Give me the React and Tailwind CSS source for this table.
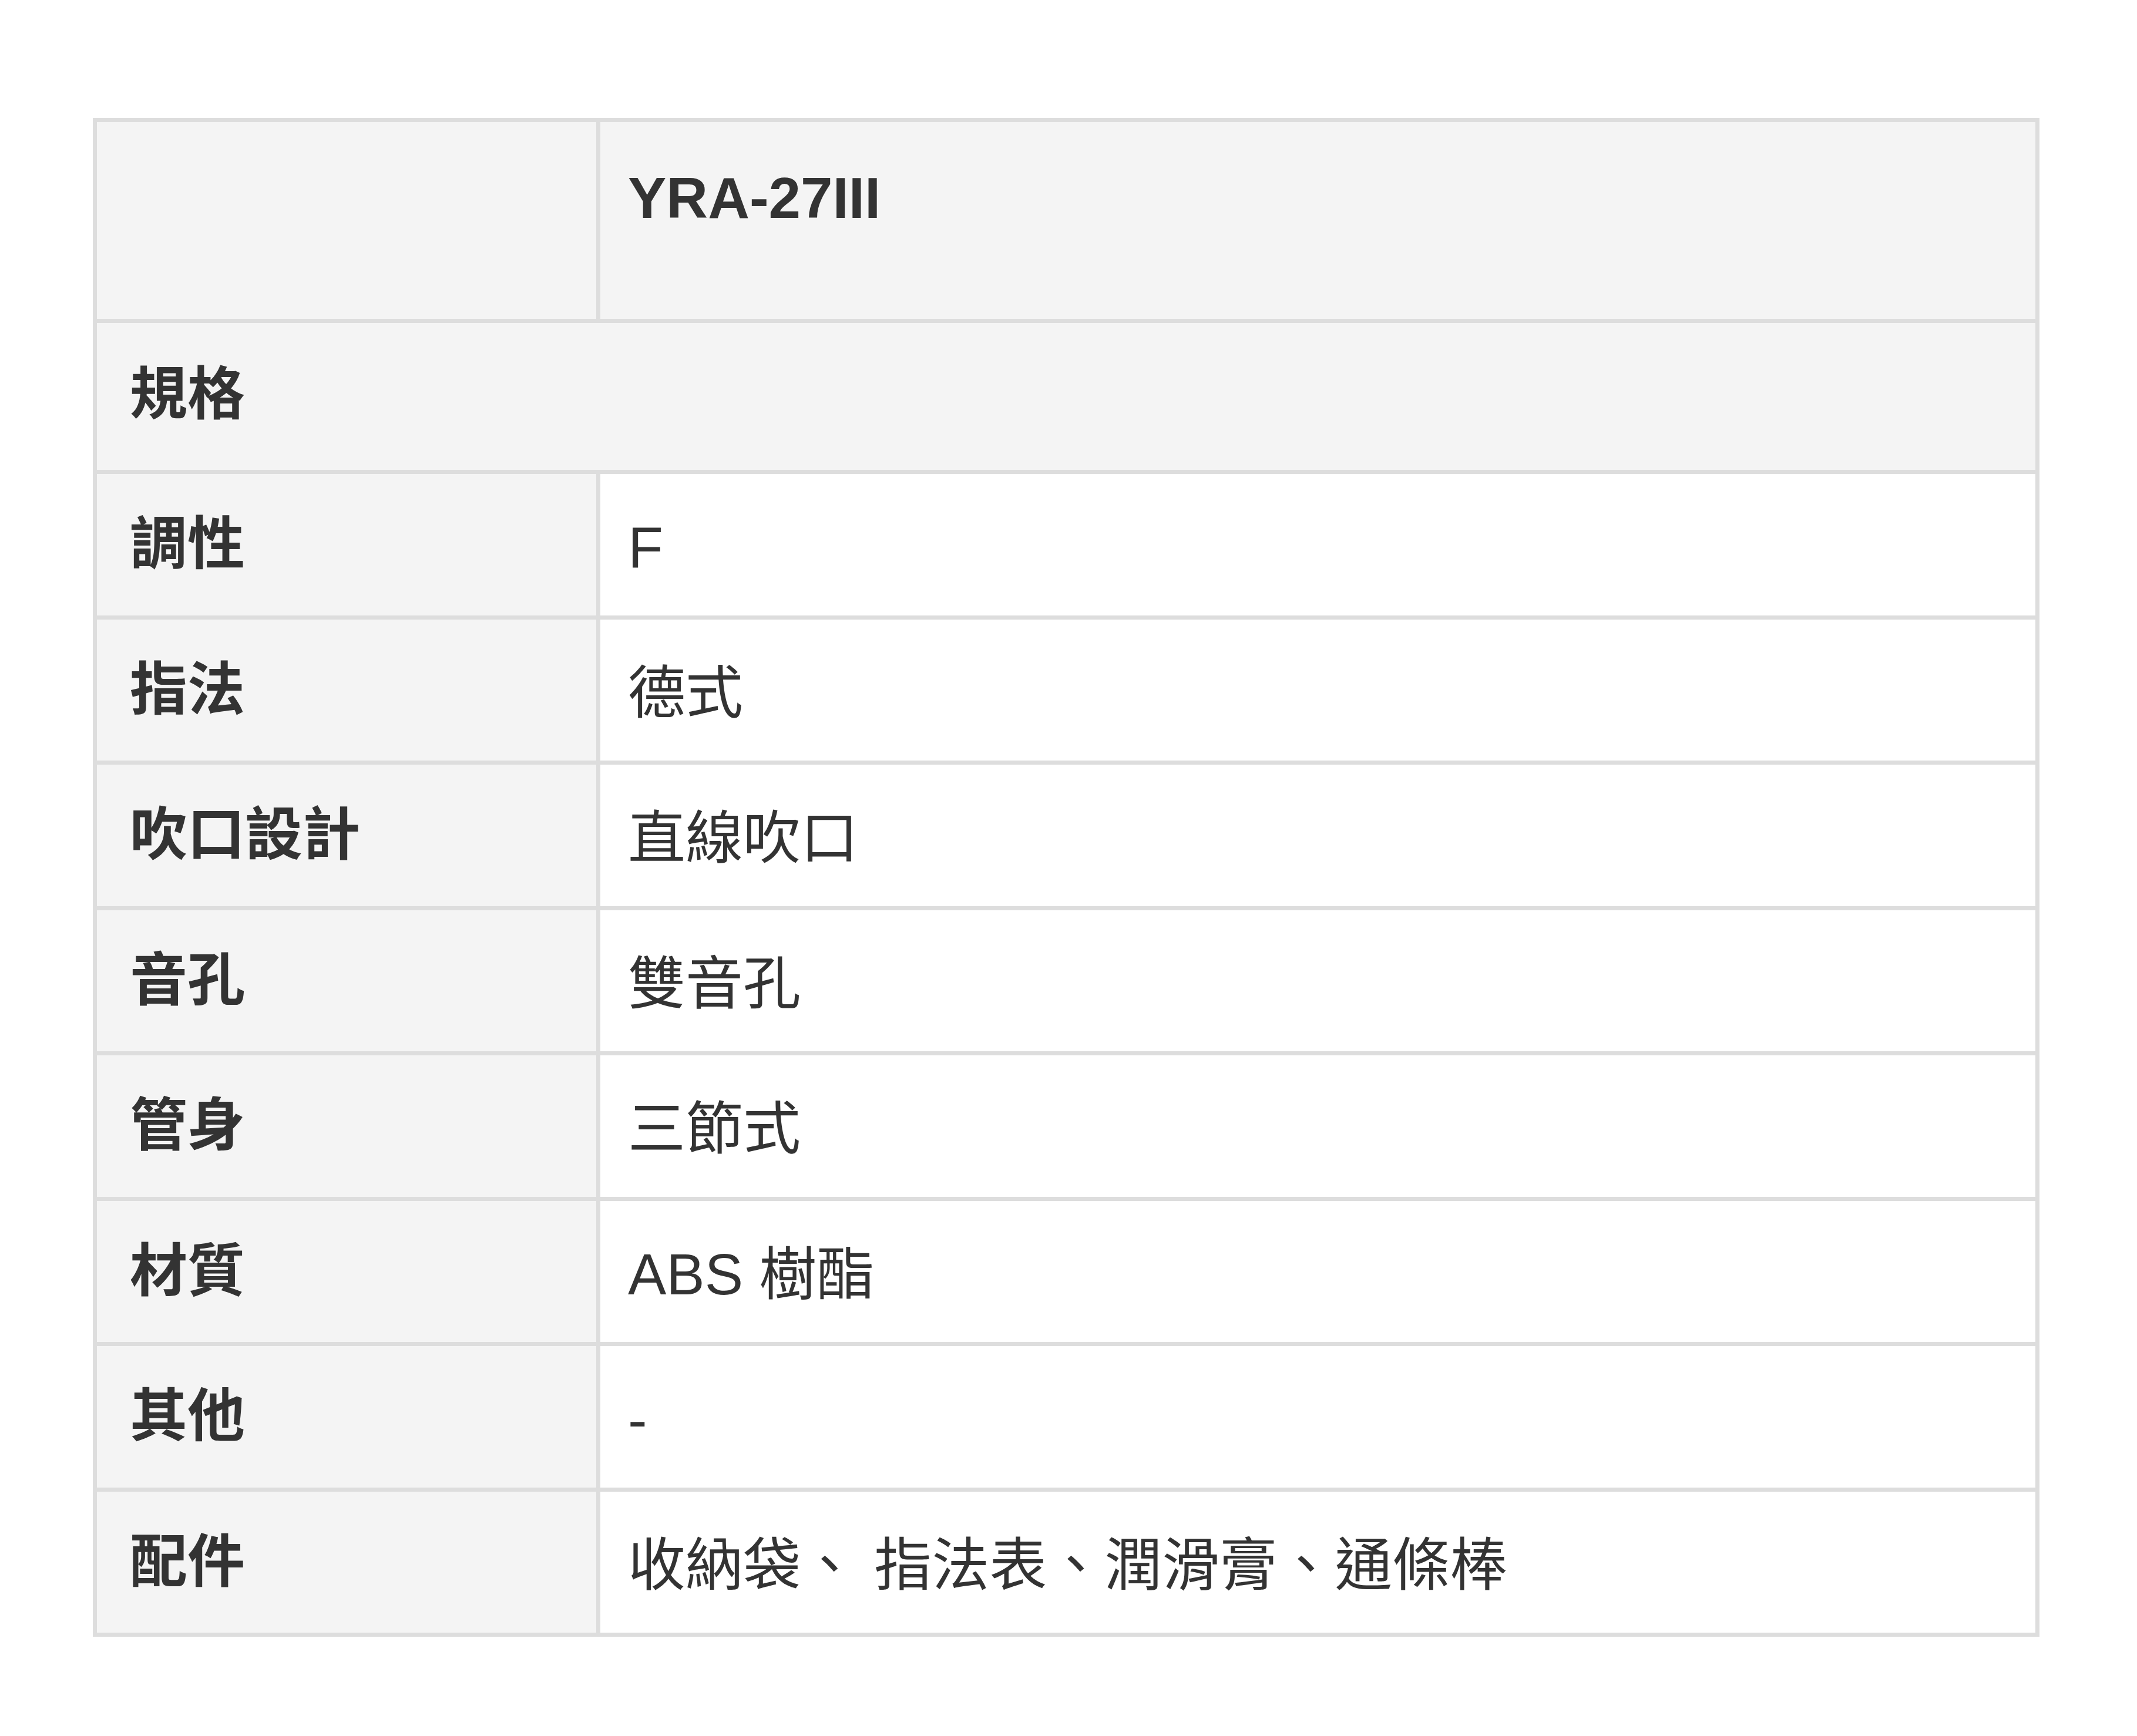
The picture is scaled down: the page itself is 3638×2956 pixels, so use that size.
import React from 'react';

const specs = [
    { label: '調性', value: 'F' },
    { label: '指法', value: '德式' },
    { label: '吹口設計', value: '直線吹口' },
    { label: '音孔', value: '雙音孔' },
    { label: '管身', value: '三節式' },
    { label: '材質', value: 'ABS 樹酯' },
    { label: '其他', value: '-' },
    { label: '配件', value: '收納袋、 指法表、潤滑膏、通條棒' },
];

export default function App() {
    return (
        <div className="min-h-screen bg-white pl-[158px] pt-[201px] text-[#333333] font-[family-name:'Liberation_Sans','Noto_Sans_CJK_TC',sans-serif] text-[98px] leading-[147px]">
            <div className="w-[3314px] border-[7px] border-[#dddddd] flex flex-col">
                {/* model header */}
                <div className="flex h-[342px] border-b-[7px] border-[#dddddd] bg-[#f4f4f4]">
                    <div className="w-[857px] shrink-0 border-r-[7px] border-[#dddddd]"></div>
                    <div className="flex-1 pl-[47px] pt-[56px] font-bold">YRA-27III</div>
                </div>

                {/* section title */}
                <div className="h-[257px] border-b-[7px] border-[#dddddd] bg-[#f4f4f4] pl-[56px] pt-[48px] font-bold">
                    規格
                </div>

                {specs.map((row, i) => (
                    <div
                        key={row.label}
                        className={
                            i < specs.length - 1
                                ? 'flex h-[247.5px] border-b-[7px] border-[#dddddd]'
                                : 'flex h-[240.5px]'
                        }
                    >
                        <div className="w-[857px] shrink-0 border-r-[7px] border-[#dddddd] bg-[#f4f4f4] pl-[56px] pt-[46px] font-bold">
                            {row.label}
                        </div>
                        <div className="flex-1 bg-white pl-[47px] pt-[52px] whitespace-nowrap">{row.value}</div>
                    </div>
                ))}
            </div>
        </div>
    );
}
